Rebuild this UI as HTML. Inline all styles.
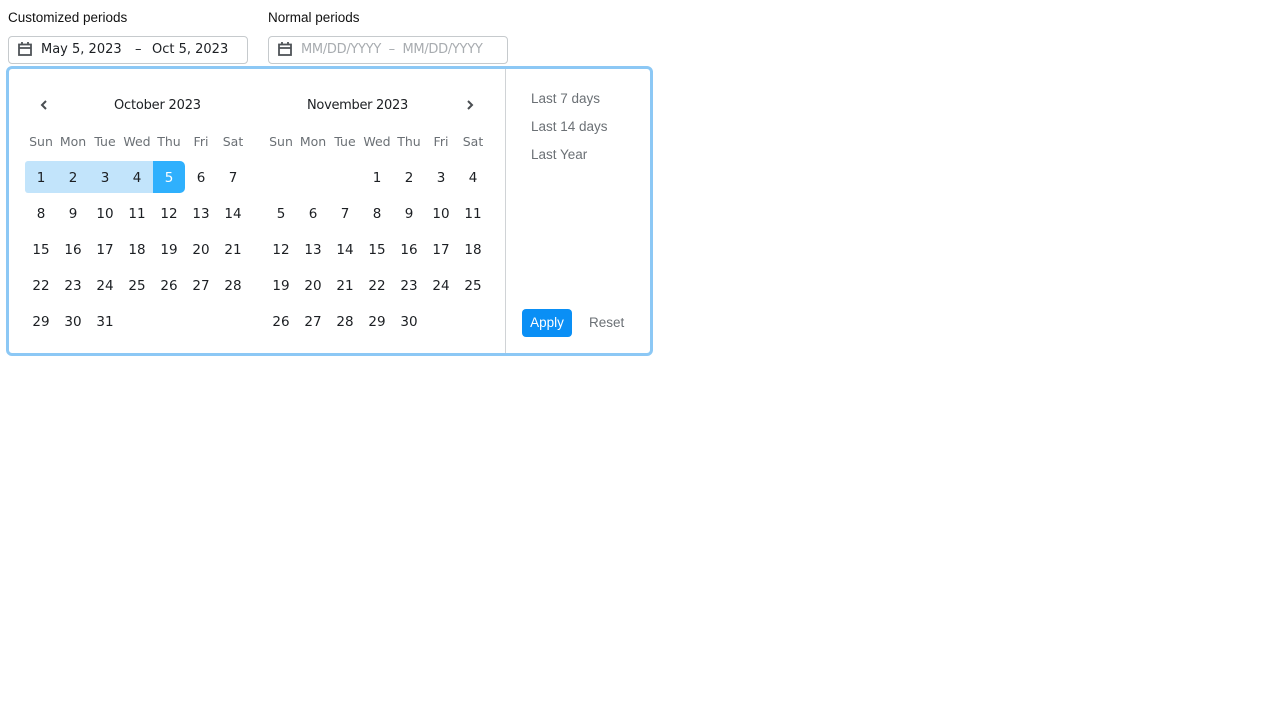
<!DOCTYPE html>
<html><head><style>
body{margin:0;background:#fff;font-family:"DejaVu Sans","Liberation Sans",sans-serif;color:#1c1f23;}
.a{position:absolute;white-space:nowrap}
.lbl{font-family:"Liberation Sans",sans-serif;font-size:13.5px;color:#111}
.inp{position:absolute;top:36px;height:28px;border:1px solid #c6cacd;border-radius:4px;width:240px;box-sizing:border-box}
.pop{position:absolute;left:6px;top:66px;width:647px;height:290px;box-sizing:border-box;border:3px solid #8cc8f5;border-radius:6px}
.c{position:absolute;width:32px;height:32px;line-height:34px;text-align:center;font-size:13.5px;color:#1c1f23}
.h{position:absolute;width:32px;text-align:center;font-size:12.5px;color:#6b7075}
.t{font-size:13px;color:#1c1f23}
.side{font-family:"Liberation Sans",sans-serif;font-size:13.5px;color:#6b7075}
</style></head><body>
<div class="a lbl" style="left:8px;top:10px">Customized periods</div>
<div class="a lbl" style="left:268px;top:10px">Normal periods</div>
<div class="inp" style="left:8px"></div>
<div class="inp" style="left:268px"></div>
<svg class="a" style="left:17px;top:41px" width="16" height="16" viewBox="0 0 16 16"><g fill="none" stroke="#4f5357" stroke-width="1.8"><rect x="2" y="3.5" width="12" height="10.5"/><line x1="2" y1="7" x2="14" y2="7"/><line x1="5" y1="1" x2="5" y2="4"/><line x1="11" y1="1" x2="11" y2="4"/></g></svg>
<svg class="a" style="left:277px;top:41px" width="16" height="16" viewBox="0 0 16 16"><g fill="none" stroke="#4f5357" stroke-width="1.8"><rect x="2" y="3.5" width="12" height="10.5"/><line x1="2" y1="7" x2="14" y2="7"/><line x1="5" y1="1" x2="5" y2="4"/><line x1="11" y1="1" x2="11" y2="4"/></g></svg>
<div class="a t" style="left:41px;top:42px">May 5, 2023</div>
<div class="a t" style="left:135px;top:42px">–</div>
<div class="a t" style="left:152px;top:42px">Oct 5, 2023</div>
<div class="a t" style="left:301px;top:42px;color:#a8acb0;font-size:13px;letter-spacing:-0.3px">MM/DD/YYYY &nbsp;–&nbsp; MM/DD/YYYY</div>
<div class="pop"></div>
<div class="a" style="left:505px;top:69px;width:1px;height:284px;background:#d0d3d6"></div>
<svg class="a" style="left:38px;top:99px" width="12" height="12"><path d="M8 2 L4 6 L8 10" fill="none" stroke="#4a4e52" stroke-width="2"/></svg>
<svg class="a" style="left:464px;top:99px" width="12" height="12"><path d="M4 2 L8 6 L4 10" fill="none" stroke="#4a4e52" stroke-width="2"/></svg>
<div class="a t" style="left:114px;top:98px;letter-spacing:-0.2px">October 2023</div>
<div class="a t" style="left:307px;top:98px;letter-spacing:-0.3px">November 2023</div>
<div class="a" style="left:25px;top:161px;width:128px;height:32px;background:#c2e4fb;border-radius:3px 0 0 3px"></div>
<div class="a" style="left:153px;top:161px;width:32px;height:32px;background:#2fb0fd;border-radius:0 5px 5px 0"></div>
<div id="g"></div>
<div class="a side" style="left:531px;top:91px">Last 7 days</div>
<div class="a side" style="left:531px;top:119px">Last 14 days</div>
<div class="a side" style="left:531px;top:147px">Last Year</div>
<div class="a" style="left:522px;top:309px;width:50px;height:28px;background:#0a8ff5;border-radius:4px;color:#fff;font-family:'Liberation Sans',sans-serif;font-size:13.5px;line-height:28px;text-align:center">Apply</div>
<div class="a side" style="left:589px;top:315px">Reset</div>
<script>
var d=["Sun","Mon","Tue","Wed","Thu","Fri","Sat"],h="";
function cal(x0,start,n){for(var i=0;i<7;i++)h+='<div class="h" style="left:'+(x0+i*32)+'px;top:134px">'+d[i]+'</div>';
for(var k=1;k<=n;k++){var p=start+k-1,c=p%7,r=Math.floor(p/7);h+='<div class="c" style="left:'+(x0+c*32)+'px;top:'+(161+r*36)+'px'+(x0<100&&k==5?';color:#fff':'')+'">'+k+'</div>';}}
cal(25,0,31);cal(265,3,30);
document.getElementById("g").innerHTML=h;
</script>
</body></html>
